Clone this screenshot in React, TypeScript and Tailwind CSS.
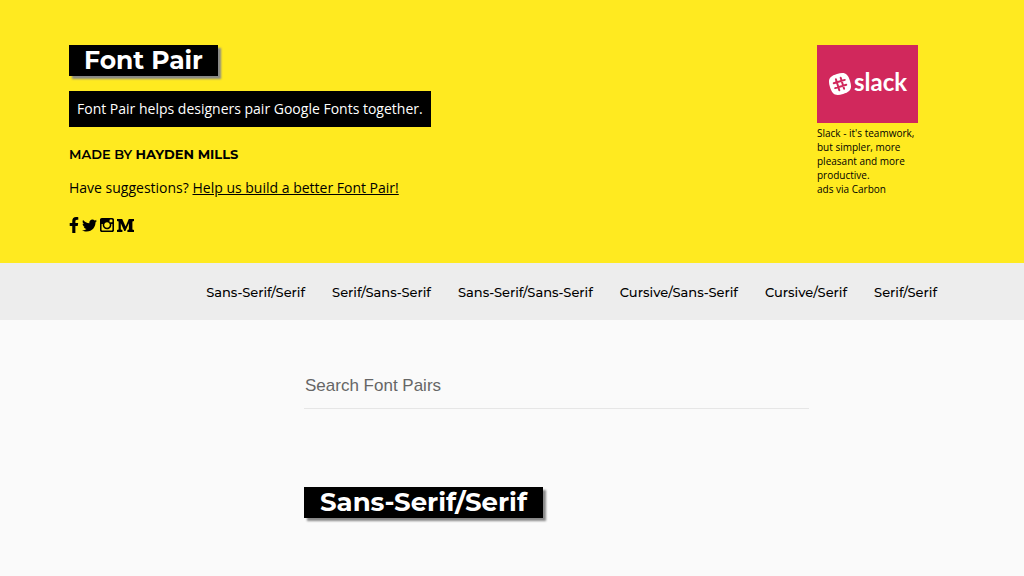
import { FaFacebookF, FaTwitter } from 'react-icons/fa';

const categories = [
  'Sans-Serif/Serif',
  'Serif/Sans-Serif',
  'Sans-Serif/Sans-Serif',
  'Cursive/Sans-Serif',
  'Cursive/Serif',
  'Serif/Serif',
];

function InstagramIcon() {
  return (
    <svg viewBox="128 128 1536 1536" className="size-[14px]" fill="currentColor" aria-hidden="true">
      <path d="M1490 1426v-648h-135q20 63 20 131 0 126-64 232.5t-174 168.5-240 62q-197 0-337-135.5t-140-327.5q0-68 20-131h-141v648q0 26 17.5 43.5t43.5 17.5h1069q25 0 43-17.5t18-43.5zm-284-533q0-124-90.5-211.5t-218.5-87.5q-127 0-217.5 87.5t-90.5 211.5 90.5 211.5 217.5 87.5q128 0 218.5-87.5t90.5-211.5zm284-360v-165q0-28-20-48.5t-49-20.5h-174q-29 0-49 20.5t-20 48.5v165q0 29 20 49t49 20h174q29 0 49-20t20-49zm174-208v1142q0 81-58 139t-139 58h-1142q-81 0-139-58t-58-139v-1142q0-81 58-139t139-58h1142q81 0 139 58t58 139z" />
    </svg>
  );
}

function MediumIcon() {
  return (
    <svg viewBox="0 0 17 13" className="h-[13px] w-[17px]" fill="currentColor" aria-hidden="true">
      <path d="M0 0H5.200L8.600 7.400L11.800 0H17V2.100L15.400 2.500V10.500L17 10.900V13H10.400V10.900L11.900 10.500V4.300L8.400 12H7.300L3.800 4.300V10.500L5.400 10.900V13H0V10.900L1.600 10.500V2.500L0 2.100Z" />
    </svg>
  );
}

function SlackMark() {
  return (
    <svg viewBox="0 0 24 24" className="size-6" aria-hidden="true">
      <g transform="rotate(-17 12 12)">
        <path
          d="M12 1.500C20 1.500 22.500 4 22.500 12C22.500 20 20 22.500 12 22.500C4 22.500 1.500 20 1.500 12C1.500 4 4 1.500 12 1.500Z"
          fill="#fff"
        />
        <path
          d="M9.500 6.200V17.800M14.500 6.200V17.800M6.200 9.500H17.800M6.200 14.500H17.800"
          stroke="#d1285c"
          strokeWidth="2"
          strokeLinecap="round"
        />
      </g>
    </svg>
  );
}

export default function App() {
  return (
    <div className="min-h-screen bg-[#fafafa] font-['Open_Sans',sans-serif] text-black">
      <header className="flex items-start justify-between bg-[#ffea20] pt-[45px] pr-[106px] pb-[29px] pl-[69px]">
        <div className="flex flex-col items-start">
          <h1 className="bg-black px-[15px] font-['Montserrat',sans-serif] text-[25px] leading-[31px] font-bold text-white shadow-[3px_3px_2px_#888]">
            Font Pair
          </h1>
          <p className="mt-[15px] bg-black px-2 text-[14px] leading-9 text-white">
            Font Pair helps designers pair Google Fonts together.
          </p>
          <h2 className="mt-[17px] font-['Montserrat',sans-serif] text-[13px] leading-5 font-semibold">
            MADE BY{' '}
            <a href="#hayden-mills" className="font-bold">
              HAYDEN MILLS
            </a>
          </h2>
          <p className="mt-3 text-[14px] leading-6">
            Have suggestions?{' '}
            <a href="#suggestions" className="underline">
              Help us build a better Font Pair!
            </a>
          </p>
          <div className="mt-4 flex h-[18px] items-center gap-[3px]">
            <a href="#facebook" aria-label="Facebook">
              <FaFacebookF className="h-4 w-[10px]" />
            </a>
            <a href="#twitter" aria-label="Twitter">
              <FaTwitter className="size-[15px]" />
            </a>
            <a href="#instagram" aria-label="Instagram">
              <InstagramIcon />
            </a>
            <a href="#medium" aria-label="Medium">
              <MediumIcon />
            </a>
          </div>
        </div>
        <aside className="w-[101px] text-[10px] leading-[14px]">
          <a
            href="#slack"
            className="mb-[3px] flex h-[78px] items-center justify-center gap-[2px] bg-[#d1285c] font-['Lato',sans-serif] text-[24px] font-bold text-white"
          >
            <SlackMark />
            <span className="pb-1 leading-6">slack</span>
          </a>
          <p>
            <a href="#slack">Slack - it's teamwork, but simpler, more pleasant and more productive.</a>
          </p>
          <p>
            <a href="#carbon">ads via Carbon</a>
          </p>
        </aside>
      </header>

      <nav className="bg-[#ededed] pt-[19px] pr-[87px] pb-[18px]">
        <ul className="flex justify-end gap-[27px] font-['Montserrat',sans-serif] text-[13px] leading-5 font-medium whitespace-nowrap">
          {categories.map((name) => (
            <li key={name}>
              <a href={'#' + name.toLowerCase().replace('/', '-')}>{name}</a>
            </li>
          ))}
        </ul>
      </nav>

      <main className="flex flex-col items-start pt-[43px] pr-[215px] pl-[304px]">
        <input
          type="search"
          aria-label="Search Font Pairs"
          placeholder="Search Font Pairs"
          className="h-[46px] w-full border-b border-[#e6e6e6] bg-transparent px-px font-['Liberation_Sans',sans-serif] text-[17px] outline-none placeholder:text-[#666]"
        />
        <h2
          id="sans-serif-serif"
          className="mt-[78px] bg-black px-4 font-['Montserrat',sans-serif] text-[26px] leading-[31px] font-bold text-white shadow-[3px_3px_2px_#888]"
        >
          Sans-Serif/Serif
        </h2>
      </main>
    </div>
  );
}
